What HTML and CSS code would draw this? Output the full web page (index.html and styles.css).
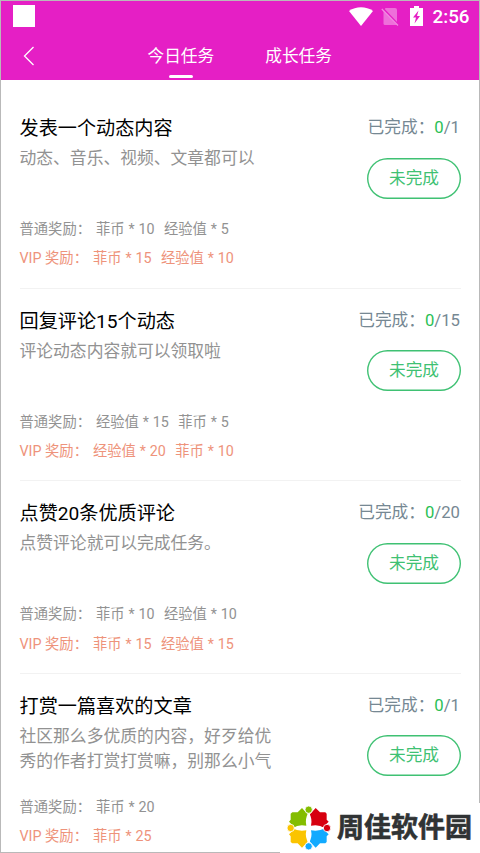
FILE: index.html
```html
<!DOCTYPE html>
<html lang="zh-CN">
<head>
<meta charset="utf-8">
<title>今日任务</title>
<link rel="stylesheet" href="styles.css">
</head>
<body>
<div class="screen">
  <header class="header">
    <div class="status">
      <span class="status-app"></span>
      <svg class="wifi" viewBox="0 0 24 19"><path d="M0 4C7-1 17-1 24 4L12 19Z" fill="#fff"/></svg>
      <svg class="sim" viewBox="0 0 18 19"><path d="M4.500 1H14Q16 1 16 3V18H4Q2.500 18 2.500 16.500V4Z" fill="#fff" opacity=".36"/><path d="M1.300 1L17.500 18" stroke="#e51fc5" stroke-width="2.200"/><path d="M.8 2L17 18.500" stroke="#f28be2" stroke-width="1.200"/></svg>
      <svg class="battery" viewBox="0 0 13 20"><path d="M4 0H9V2H13V20H0V2H4Z" fill="#fff"/><path d="M8.500 4.500L3 11.500H6L4.500 17.500L10 10H7Z" fill="#e51fc5"/></svg>
      <span class="clock">2:56</span>
    </div>
    <nav class="nav">
      <svg class="back" viewBox="0 0 12 20"><path d="M10.500 1L1.500 10L10.500 19" fill="none" stroke="#fff" stroke-width="1.300"/></svg>
      <span class="tab active">今日任务</span>
      <span class="tab">成长任务</span>
    </nav>
  </header>
  <main class="tasks">
    <section class="task">
      <div class="info"><h2>发表一个动态内容</h2><p class="desc">动态、音乐、视频、文章都可以</p>
        <div class="reward"><span class="label">普通奖励：</span><span>菲币 * 10</span><span>经验值 * 5</span></div>
        <div class="reward vip"><span class="label">VIP 奖励：</span><span>菲币 * 15</span><span>经验值 * 10</span></div></div>
      <div class="side"><div class="progress">已完成：<b>0</b>/1</div><button class="state">未完成</button></div>
    </section>
    <section class="task">
      <div class="info"><h2>回复评论15个动态</h2><p class="desc">评论动态内容就可以领取啦</p>
        <div class="reward"><span class="label">普通奖励：</span><span>经验值 * 15</span><span>菲币 * 5</span></div>
        <div class="reward vip"><span class="label">VIP 奖励：</span><span>经验值 * 20</span><span>菲币 * 10</span></div></div>
      <div class="side"><div class="progress">已完成：<b>0</b>/15</div><button class="state">未完成</button></div>
    </section>
    <section class="task">
      <div class="info"><h2>点赞20条优质评论</h2><p class="desc">点赞评论就可以完成任务。</p>
        <div class="reward"><span class="label">普通奖励：</span><span>菲币 * 10</span><span>经验值 * 10</span></div>
        <div class="reward vip"><span class="label">VIP 奖励：</span><span>菲币 * 15</span><span>经验值 * 15</span></div></div>
      <div class="side"><div class="progress">已完成：<b>0</b>/20</div><button class="state">未完成</button></div>
    </section>
    <section class="task">
      <div class="info"><h2>打赏一篇喜欢的文章</h2><p class="desc">社区那么多优质的内容，好歹给优秀的作者打赏打赏嘛，别那么小气</p>
        <div class="reward"><span class="label">普通奖励：</span><span>菲币 * 20</span></div>
        <div class="reward vip"><span class="label">VIP 奖励：</span><span>菲币 * 25</span></div></div>
      <div class="side"><div class="progress">已完成：<b>0</b>/1</div><button class="state">未完成</button></div>
    </section>
  </main>
</div>
<div class="watermark">
  <svg class="mark" viewBox="22 17 132 132">
    <path d="M67 23L84 42V80H44L28 64L33 58V40L38 36H54Z" fill="#84bd00"/>
    <path d="M108 23L121 36H137L141 40V58L147 64L131 80H91V42Z" fill="#d7000f"/>
    <path d="M44 87H84V124L67 142L54 129H38L33 125V108L28 102Z" fill="#fbc400"/>
    <path d="M91 87H131L147 102L141 108V125L137 129H121L108 142L91 124Z" fill="#12aaff"/>
    <path d="M87 36Q99 56 94 76Q118 71 134 83Q118 95 94 90Q99 110 87 130Q75 110 80 90Q56 95 40 83Q56 71 80 76Q75 56 87 36Z" fill="#fff"/>
    <g stroke="#fff" stroke-width="2.500"><circle cx="87" cy="28" r="11" fill="#84bd00"/><circle cx="142" cy="83" r="11" fill="#d7000f"/><circle cx="33" cy="83" r="11" fill="#fbc400"/><circle cx="87" cy="138" r="11" fill="#12aaff"/></g>
  </svg>
  <span>周佳软件园</span>
</div>
</body>
</html>
```
FILE: styles.css
```css
* { box-sizing: border-box; }
body { margin: 0; overflow: hidden; font-family: Roboto, "Noto Sans CJK SC", sans-serif; }
.screen { width: 480px; height: 853px; border: 1px solid #b9b9b9; background: #fff; overflow: hidden; }
.header { height: 79px; background: #e51fc5; color: #fff; }
.status { height: 31px; display: flex; align-items: center; padding: 0 9.500px 0 12px; }
.status-app { width: 22px; height: 22px; margin-right: auto; margin-top: -1px; background: #fff; }
.wifi { width: 24px; height: 19px; margin: -1px 8px 0 0; }
.sim { width: 18px; height: 19px; margin: -1px 11px 0 0; }
.battery { width: 13px; height: 20px; margin: -1px 9.500px 0 0; }
.clock { font-size: 18.8px; font-weight: 500; line-height: 30px; }
.nav { height: 48px; display: flex; align-items: flex-start; padding-left: 22px; }
.back { width: 12px; height: 20px; margin: 14px 112.500px 0 0; }
.tab { position: relative; height: 48px; margin-right: 51px; font-size: 16.7px; line-height: 49px; white-space: nowrap; }
.active::after { content: ""; position: absolute; left: 21px; bottom: 2px; width: 24px; height: 3px; border-radius: 2px; background: #fff; }
.tasks { padding: 16px 18px 0 18.500px; }
.task { height: 192.6px; display: flex; justify-content: space-between; border-bottom: 1px solid #f2f2f2; }
.info { width: 256px; padding-top: 19.300px; }
h2 { margin: 0; font-size: 19.15px; font-weight: 400; line-height: 28px; color: #000; white-space: nowrap; }
.desc { margin: 3px 0 0; height: 68.700px; font-size: 16.8px; line-height: 24.5px; color: #929292; }
.reward { display: flex; gap: 9.500px; font-size: 14.3px; line-height: 29.5px; color: #929292; white-space: nowrap; }
.reward span + span { word-spacing: .3px; }
.label { margin-right: -4.500px; }
.vip { color: #ee937b; }
.side { display: flex; flex-direction: column; align-items: flex-end; padding-top: 19px; }
.progress { font-size: 16.7px; line-height: 26px; color: #768893; white-space: nowrap; margin-right: 1px; }
.progress b { font-weight: 400; color: #2abf55; }
.state { width: 94px; height: 41px; margin-top: 16.500px; padding: 0; border: 0; box-shadow: inset 0 0 0 1.4px #3fc173; border-radius: 21px; background: #fff; color: #3fc173; font: inherit; font-size: 16.7px; line-height: 41px; }
.watermark { position: absolute; left: 280px; top: 803px; width: 200px; height: 50px; display: flex; align-items: center; padding-left: 7px; background: #fff; }
.mark { width: 44px; height: 44px; flex: none; margin-right: 6px; }
.watermark span { font-size: 27px; font-weight: 700; line-height: 52px; color: #303334; -webkit-text-stroke: .6px #303334; white-space: nowrap; }
```
